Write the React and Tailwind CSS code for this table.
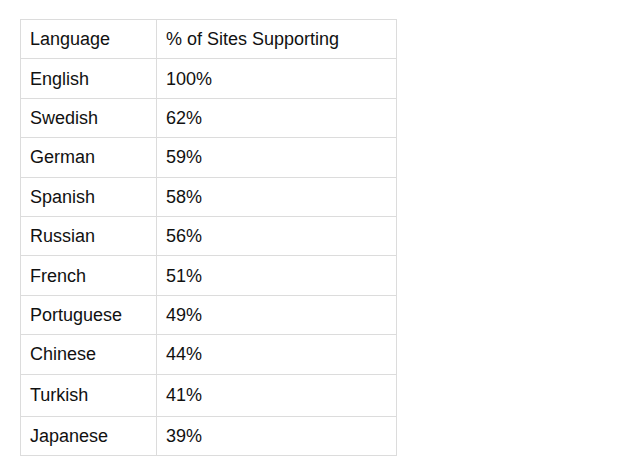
import React from "react";

const rows = [
  ["English", "100%"],
  ["Swedish", "62%"],
  ["German", "59%"],
  ["Spanish", "58%"],
  ["Russian", "56%"],
  ["French", "51%"],
  ["Portuguese", "49%"],
  ["Chinese", "44%"],
  ["Turkish", "41%"],
  ["Japanese", "39%"],
];

const App = () => {
  return (
    <div className="w-[640px] h-[472px] bg-white pt-[19px] pl-[20px] font-['Liberation_Sans',Arial,sans-serif] text-[18px] text-[#111]">
      <table className="border-collapse w-[377px]">
        <thead>
          <tr className="h-[39.4px]">
            <th className="w-[136px] border border-[#dcdcdc] px-[9px] pt-[1px] text-left font-normal">
              Language
            </th>
            <th className="border border-[#dcdcdc] px-[9px] pt-[1px] text-left font-normal">
              % of Sites Supporting
            </th>
          </tr>
        </thead>
        <tbody>
          {rows.map((r) => (
            <tr
              key={r[0]}
              className={
                r[0] === "Turkish"
                  ? "h-[42px]"
                  : r[0] === "Japanese"
                  ? "h-[39.5px]"
                  : "h-[39.4px]"
              }
            >
              <td className="border border-[#dcdcdc] px-[9px] pt-[1px]">{r[0]}</td>
              <td className="border border-[#dcdcdc] px-[9px] pt-[1px]">{r[1]}</td>
            </tr>
          ))}
        </tbody>
      </table>
    </div>
  );
};

export default App;
